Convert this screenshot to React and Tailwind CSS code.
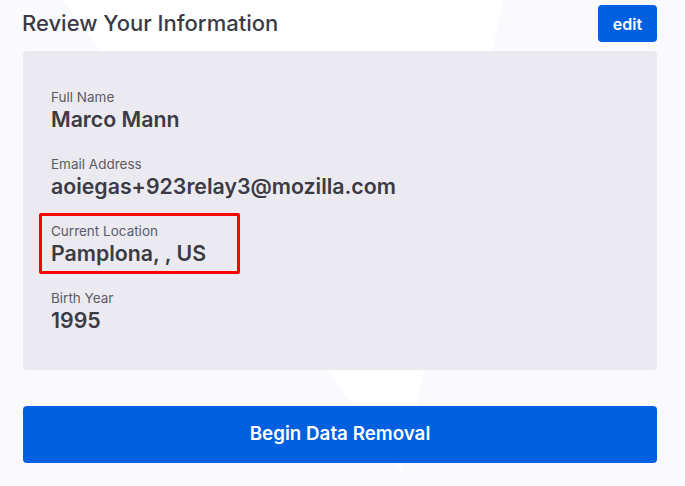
export default function App() {
  const fields = [
    { label: "Full Name", value: "Marco Mann" },
    { label: "Email Address", value: "aoiegas+923relay3@mozilla.com" },
    { label: "Current Location", value: "Pamplona, , US", highlight: true },
    { label: "Birth Year", value: "1995" },
  ];

  return (
    <div
      className="relative w-[685px] h-[486px] overflow-hidden bg-[#f9f9fe]"
      style={{ fontFamily: "Inter, 'Noto Sans', sans-serif" }}
    >
      <svg className="absolute inset-0" width="685" height="486" aria-hidden="true">
        <polygon points="63,0 503,0 402,474" fill="#ffffff" />
      </svg>

      <div className="relative pl-[23px] pr-[28px] pt-[5px]">
        <div className="flex items-center justify-between h-[37px]">
          <h2 className="text-[22px] font-medium text-[#3b3b45] -ml-px">
            Review Your Information
          </h2>
          <button className="h-[37px] w-[59px] rounded-[4px] bg-[#0060df] text-white text-[16px] font-semibold">
            edit
          </button>
        </div>

        <div className="mt-[9px] h-[319px] rounded-[4px] bg-[#e9e8ee]/90 pl-[28px] pt-[38px] flex flex-col gap-[23px]">
          {fields.map((f) => (
            <div
              key={f.label}
              className={
                f.highlight
                  ? "-ml-[12px] -mt-[10px] -mb-[7px] pl-[9px] pt-[7px] pb-[4px] w-[201px] border-[3px] border-[#ff0000] rounded-[2px]"
                  : ""
              }
            >
              <div className="text-[13.5px] leading-[16px] text-[#5b5b66]">{f.label}</div>
              <div className="text-[21.3px] leading-[28px] font-semibold text-[#3b3b45]">{f.value}</div>
            </div>
          ))}
        </div>

        <button className="mt-[36px] w-full h-[57px] rounded-[4px] bg-[#0060df] text-white text-[18.8px] font-semibold">
          Begin Data Removal
        </button>
      </div>
    </div>
  );
}
